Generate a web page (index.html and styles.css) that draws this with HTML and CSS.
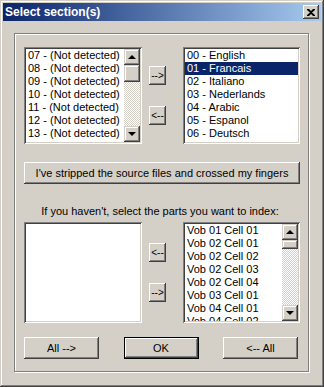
FILE: index.html
```html
<!DOCTYPE html>
<html lang="en">
<head>
    <meta charset="UTF-8">
    <title>Select section(s)</title>
    <link rel="stylesheet" href="styles.css">
</head>
<body>
    <div class="window">
        <div class="titlebar">
            <span class="title">Select section(s)</span>
            <div class="close-btn">
                <svg width="8" height="7" viewBox="0 0 8 7"><path d="M0 0h2l2 2 2-2h2v1L5 3.5 8 6v1H6L4 5 2 7H0V6l3-2.5L0 1z" fill="#000"/></svg>
            </div>
        </div>

        <div class="groupbox">
            <!-- Sections -->
            <div class="pick-row top-row">
                <div class="listbox list-left">
                    <div class="list-items">
                        <div class="item">07 - (Not detected)</div>
                        <div class="item">08 - (Not detected)</div>
                        <div class="item">09 - (Not detected)</div>
                        <div class="item">10 - (Not detected)</div>
                        <div class="item">11 - (Not detected)</div>
                        <div class="item">12 - (Not detected)</div>
                        <div class="item">13 - (Not detected)</div>
                        <div class="item">14 - (Not detected)</div>
                    </div>
                    <div class="scrollbar">
                        <div class="sb-btn"><span class="arrow-up"></span></div>
                        <div class="sb-thumb thumb-big"></div>
                        <div class="sb-track"></div>
                        <div class="sb-btn"><span class="arrow-down"></span></div>
                    </div>
                </div>
                <div class="move-col">
                    <button class="btn small">--&gt;</button>
                    <button class="btn small">&lt;--</button>
                </div>
                <div class="listbox list-right">
                    <div class="list-items">
                        <div class="item">00 - English</div>
                        <div class="item selected">01 - Francais</div>
                        <div class="item">02 - Italiano</div>
                        <div class="item">03 - Nederlands</div>
                        <div class="item">04 - Arabic</div>
                        <div class="item">05 - Espanol</div>
                        <div class="item">06 - Deutsch</div>
                    </div>
                </div>
            </div>

            <button class="btn wide">I've stripped the source files and crossed my fingers</button>
            <div class="hint">If you haven't, select the parts you want to index:</div>

            <!-- Cells -->
            <div class="pick-row bottom-row">
                <div class="listbox list-left"></div>
                <div class="move-col">
                    <button class="btn small">&lt;--</button>
                    <button class="btn small">--&gt;</button>
                </div>
                <div class="listbox list-right">
                    <div class="list-items">
                        <div class="item">Vob 01 Cell 01</div>
                        <div class="item">Vob 02 Cell 01</div>
                        <div class="item">Vob 02 Cell 02</div>
                        <div class="item">Vob 02 Cell 03</div>
                        <div class="item">Vob 02 Cell 04</div>
                        <div class="item">Vob 03 Cell 01</div>
                        <div class="item">Vob 04 Cell 01</div>
                        <div class="item">Vob 04 Cell 02</div>
                    </div>
                    <div class="scrollbar">
                        <div class="sb-btn"><span class="arrow-up"></span></div>
                        <div class="sb-thumb thumb-small"></div>
                        <div class="sb-track"></div>
                        <div class="sb-btn"><span class="arrow-down"></span></div>
                    </div>
                </div>
            </div>

            <div class="footer">
                <button class="btn footer-btn">All --&gt;</button>
                <button class="btn footer-btn default">OK</button>
                <button class="btn footer-btn">&lt;-- All</button>
            </div>
        </div>
    </div>
</body>
</html>
```

FILE: styles.css
```css
* {
    margin: 0;
    padding: 0;
    box-sizing: border-box;
}

body {
    background: #d4d0c8;
    font-family: 'Liberation Sans', Arial, sans-serif;
    font-size: 11px;
    color: #000;
}

.window {
    width: 324px;
    height: 387px;
    padding: 3px;
    background: #d4d0c8;
    box-shadow: inset -1px -1px #404040, inset 1px 1px #d4d0c8,
                inset -2px -2px #808080, inset 2px 2px #fff;
}

.titlebar {
    height: 18px;
    display: flex;
    align-items: center;
    justify-content: space-between;
    padding: 0 2px 0 2px;
    background: linear-gradient(90deg, #0a246a, #a6caf0);
}

.title {
    color: #fff;
    font-weight: bold;
    font-size: 12px;
}

.close-btn {
    width: 16px;
    height: 14px;
    display: flex;
    align-items: center;
    justify-content: center;
    background: #d4d0c8;
    box-shadow: inset -1px -1px #404040, inset 1px 1px #fff,
                inset -2px -2px #808080, inset 2px 2px #d4d0c8;
}

.groupbox {
    margin: 12px 0 0 11px;
    width: 295px;
    height: 339px;
    border: 1px solid #808080;
    box-shadow: inset 1px 1px #fff, 1px 1px #fff;
    padding: 13px 8px 0 9px;
}

.pick-row {
    display: flex;
    align-items: center;
}

.top-row {
    height: 97px;
}

.bottom-row {
    height: 101px;
}

.listbox {
    height: 100%;
    background: #fff;
    display: flex;
    padding: 2px;
    box-shadow: inset 1px 1px #808080, inset -1px -1px #fff,
                inset 2px 2px #404040, inset -2px -2px #d4d0c8;
    overflow: hidden;
}

.list-left {
    width: 118px;
}

.list-right {
    width: 117px;
}

.list-items {
    flex: 1;
    overflow: hidden;
}

.item {
    height: 13px;
    line-height: 13px;
    padding-left: 2px;
    white-space: nowrap;
}

.item.selected {
    background: #0a246a;
    color: #fff;
}

.scrollbar {
    width: 16px;
    display: flex;
    flex-direction: column;
}

.sb-btn,
.sb-thumb {
    background: #d4d0c8;
    box-shadow: inset -1px -1px #404040, inset 1px 1px #d4d0c8,
                inset -2px -2px #808080, inset 2px 2px #fff;
}

.sb-btn {
    height: 16px;
    display: flex;
    align-items: center;
    justify-content: center;
}

.thumb-big {
    height: 17px;
}

.thumb-small {
    height: 9px;
}

.sb-track {
    flex: 1;
    background: repeating-conic-gradient(#fff 0 25%, #d4d0c8 0 50%) 0 0 / 2px 2px;
}

.arrow-up,
.arrow-down {
    width: 0;
    height: 0;
    border-left: 4px solid transparent;
    border-right: 4px solid transparent;
}

.arrow-up {
    border-bottom: 4px solid #000;
}

.arrow-down {
    border-top: 4px solid #000;
}

.btn {
    font-family: 'Liberation Sans', Arial, sans-serif;
    font-size: 11px;
    color: #000;
    background: #d4d0c8;
    border: none;
    box-shadow: inset -1px -1px #404040, inset 1px 1px #fff,
                inset -2px -2px #808080, inset 2px 2px #d4d0c8;
}

.move-col {
    display: flex;
    flex-direction: column;
    gap: 21px;
    margin: 0 17px 0 7px;
}

.btn.small {
    width: 17px;
    height: 19px;
    font-size: 10px;
}

.btn.wide {
    display: block;
    width: 276px;
    height: 22px;
    margin-top: 18px;
}

.hint {
    text-align: center;
    line-height: 13px;
    margin: 21px 0 4px;
    padding-right: 4px;
}

.footer {
    display: flex;
    justify-content: space-between;
    margin-top: 14px;
    padding-right: 2px;
}

.footer-btn {
    width: 75px;
    height: 22px;
}

.btn.default {
    box-shadow: inset 0 0 0 1px #000,
                inset -2px -2px #404040, inset 2px 2px #fff,
                inset -3px -3px #808080;
}
```
